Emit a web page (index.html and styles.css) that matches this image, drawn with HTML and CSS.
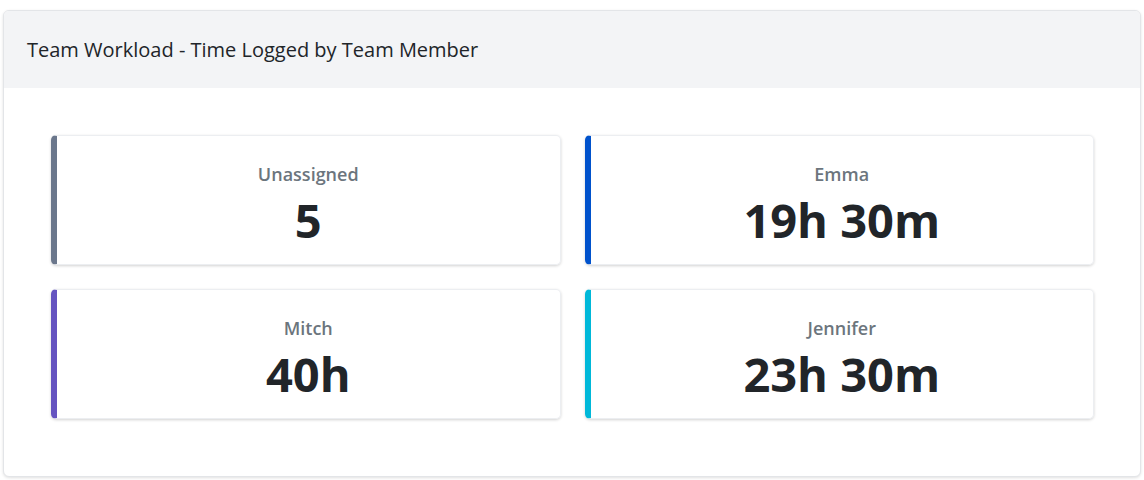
FILE: index.html
```html
<!DOCTYPE html>
<html lang="en">
<head>
<meta charset="utf-8">
<title>Team Workload</title>
<link rel="stylesheet" href="styles.css">
</head>
<body>
<div class="page">
  <section class="panel">
    <header class="panel-header">
      <h5 class="panel-title">Team Workload - Time Logged by Team Member</h5>
    </header>
    <div class="panel-body">
      <div class="stat stat-slate">
        <div class="stat-label">Unassigned</div>
        <div class="stat-value">5</div>
      </div>
      <div class="stat stat-blue">
        <div class="stat-label">Emma</div>
        <div class="stat-value">19h 30m</div>
      </div>
      <div class="stat stat-purple">
        <div class="stat-label">Mitch</div>
        <div class="stat-value">40h</div>
      </div>
      <div class="stat stat-cyan">
        <div class="stat-label">Jennifer</div>
        <div class="stat-value">23h 30m</div>
      </div>
    </div>
  </section>
</div>
</body>
</html>
```
FILE: styles.css
```css
html, body {
  margin: 0;
  padding: 0;
  background: #ffffff;
}
body {
  font-family: "Open Sans", "Noto Sans", "Liberation Sans", sans-serif;
  color: #212529;
}
.page {
  padding: 10px 3px 4px 3px;
}
.panel {
  border: 1px solid #e3e5e8;
  border-radius: 6px;
  box-shadow: 0 1px 3px rgba(0, 0, 0, 0.12);
  background: #ffffff;
  overflow: hidden;
}
.panel-header {
  background: #f3f4f6;
  padding: 24px 23px 23px 23px;
}
.panel-title {
  margin: 0;
  font-size: 20px;
  font-weight: 400;
  line-height: 30px;
  color: #212529;
}
.panel-body {
  padding: 47px 46px 57px 47px;
  display: grid;
  grid-template-columns: 1fr 1fr;
  gap: 24px;
}
.stat {
  border: 1px solid #eceef1;
  border-left: 6px solid #6b778c;
  border-radius: 5px;
  box-shadow: 0 1px 3px rgba(0, 0, 0, 0.18);
  height: 130px;
  box-sizing: border-box;
  display: flex;
  flex-direction: column;
  align-items: center;
  padding-top: 25px;
}
.stat-slate { border-left-color: #6b778c; }
.stat-blue { border-left-color: #0052cc; }
.stat-purple { border-left-color: #6554c0; }
.stat-cyan { border-left-color: #00b8d9; }
.stat-label {
  font-size: 18px;
  font-weight: 600;
  line-height: 27px;
  color: #6c757d;
}
.stat-value {
  margin-top: 4px;
  font-size: 47px;
  font-weight: 700;
  line-height: 56px;
  color: #212529;
}
```
